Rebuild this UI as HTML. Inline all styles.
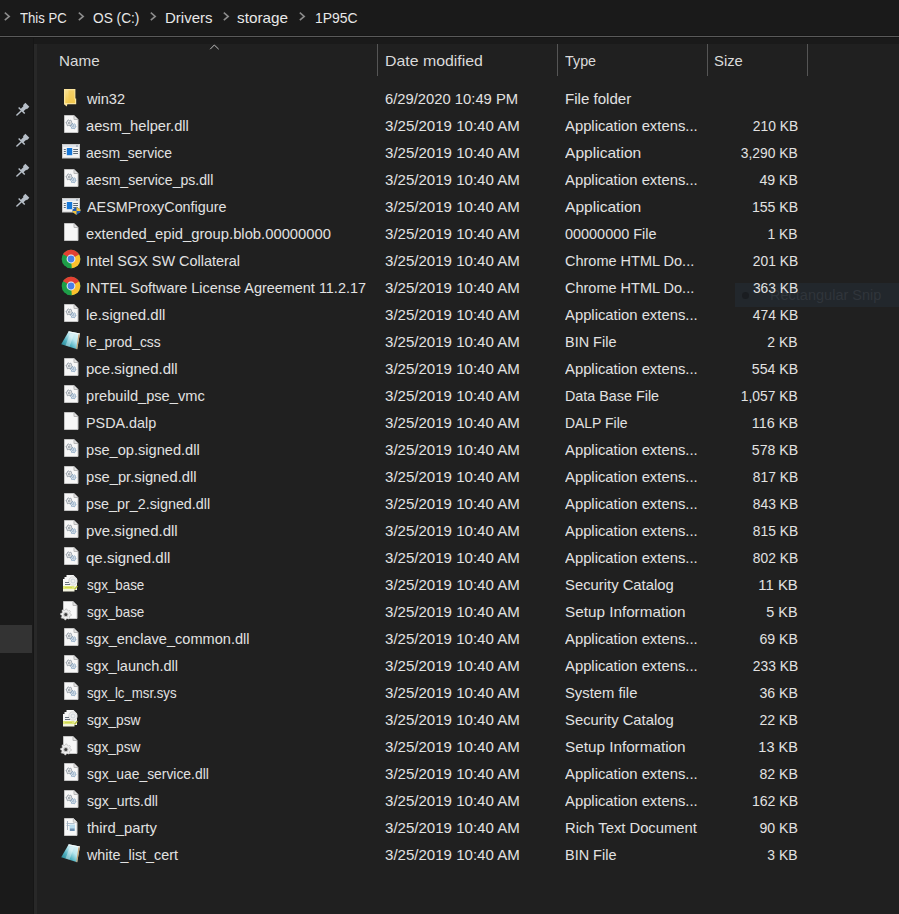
<!DOCTYPE html><html><head><meta charset="utf-8"><style>
html,body{margin:0;padding:0}
body{width:899px;height:914px;position:relative;overflow:hidden;background:#1a1a1a;font-family:"Liberation Sans",sans-serif;}
.t{position:absolute;white-space:nowrap;font-size:15px;line-height:18px;color:#e2e2e2;transform-origin:0 0}
.r{transform-origin:100% 0}
.h{color:#dadada}
.bc{color:#e8e8e8}
.ab{position:absolute}
.ic{position:absolute;line-height:0}
</style></head><body>

<div class="ab" style="left:0;top:35px;width:899px;height:1px;background:#161616"></div>
<div class="ab" style="left:0;top:36px;width:899px;height:1px;background:#5a5a5a"></div>
<div class="ab" style="left:0;top:37px;width:899px;height:1px;background:#151515"></div>
<div class="ab" style="left:37px;top:44px;width:862px;height:870px;background:#202020"></div>
<div class="ab" style="left:33px;top:38px;width:1px;height:876px;background:#161616"></div>
<div class="ab" style="left:34px;top:44px;width:3px;height:870px;background:#282828"></div>
<div class="ab" style="left:0;top:625px;width:32px;height:28px;background:#333333"></div>
<div class="ic" style="left:16px;top:102px"><svg width="15" height="15" viewBox="0 0 15 15"><path d="M2.11 6.01L3.17 4.95L4.87 6.65L7.55 3.96L6.92 3.32L9.39 0.85L13.35 4.81L10.88 7.28L10.24 6.65L7.55 9.33L9.25 11.03L8.19 12.09Z" fill="#b6bec7"/><path d="M5.15 9.05L0.91 13.01" stroke="#b6bec7" stroke-width="1.5" stroke-linecap="round"/></svg></div>
<div class="ic" style="left:16px;top:133px"><svg width="15" height="15" viewBox="0 0 15 15"><path d="M2.11 6.01L3.17 4.95L4.87 6.65L7.55 3.96L6.92 3.32L9.39 0.85L13.35 4.81L10.88 7.28L10.24 6.65L7.55 9.33L9.25 11.03L8.19 12.09Z" fill="#b6bec7"/><path d="M5.15 9.05L0.91 13.01" stroke="#b6bec7" stroke-width="1.5" stroke-linecap="round"/></svg></div>
<div class="ic" style="left:16px;top:163px"><svg width="15" height="15" viewBox="0 0 15 15"><path d="M2.11 6.01L3.17 4.95L4.87 6.65L7.55 3.96L6.92 3.32L9.39 0.85L13.35 4.81L10.88 7.28L10.24 6.65L7.55 9.33L9.25 11.03L8.19 12.09Z" fill="#b6bec7"/><path d="M5.15 9.05L0.91 13.01" stroke="#b6bec7" stroke-width="1.5" stroke-linecap="round"/></svg></div>
<div class="ic" style="left:16px;top:193px"><svg width="15" height="15" viewBox="0 0 15 15"><path d="M2.11 6.01L3.17 4.95L4.87 6.65L7.55 3.96L6.92 3.32L9.39 0.85L13.35 4.81L10.88 7.28L10.24 6.65L7.55 9.33L9.25 11.03L8.19 12.09Z" fill="#b6bec7"/><path d="M5.15 9.05L0.91 13.01" stroke="#b6bec7" stroke-width="1.5" stroke-linecap="round"/></svg></div>
<div class="ic" style="left:4px;top:12px"><svg width="7" height="10" viewBox="0 0 7 10"><path d="M0.8 0.7L5.2 4.4L0.8 8.1" fill="none" stroke="#8c8c8c" stroke-width="1.6"/></svg></div>
<div class="ic" style="left:78px;top:12px"><svg width="7" height="10" viewBox="0 0 7 10"><path d="M0.8 0.7L5.2 4.4L0.8 8.1" fill="none" stroke="#8c8c8c" stroke-width="1.6"/></svg></div>
<div class="ic" style="left:150px;top:12px"><svg width="7" height="10" viewBox="0 0 7 10"><path d="M0.8 0.7L5.2 4.4L0.8 8.1" fill="none" stroke="#8c8c8c" stroke-width="1.6"/></svg></div>
<div class="ic" style="left:223px;top:12px"><svg width="7" height="10" viewBox="0 0 7 10"><path d="M0.8 0.7L5.2 4.4L0.8 8.1" fill="none" stroke="#8c8c8c" stroke-width="1.6"/></svg></div>
<div class="ic" style="left:299px;top:12px"><svg width="7" height="10" viewBox="0 0 7 10"><path d="M0.8 0.7L5.2 4.4L0.8 8.1" fill="none" stroke="#8c8c8c" stroke-width="1.6"/></svg></div>
<div id="k_bc0" class="t bc" style="left:20.30px;top:9px;transform:scaleX(0.8760)">This PC</div>
<div id="k_bc1" class="t bc" style="left:92.62px;top:9px;transform:scaleX(0.9135)">OS (C:)</div>
<div id="k_bc2" class="t bc" style="left:164.98px;top:9px;transform:scaleX(1.0000)">Drivers</div>
<div id="k_bc3" class="t bc" style="left:237.44px;top:9px;transform:scaleX(1.0195)">storage</div>
<div id="k_bc4" class="t bc" style="left:315.28px;top:9px;transform:scaleX(0.9284)">1P95C</div>
<div id="k_h0" class="t h" style="left:58.64px;top:52px;transform:scaleX(1.0145)">Name</div>
<div id="k_h1" class="t h" style="left:384.52px;top:52px;transform:scaleX(1.0584)">Date modified</div>
<div id="k_h2" class="t h" style="left:565.00px;top:52px;transform:scaleX(0.9552)">Type</div>
<div id="k_h3" class="t h" style="left:714.16px;top:52px;transform:scaleX(0.9883)">Size</div>
<div class="ab" style="left:377px;top:44px;width:1px;height:32px;background:#555555"></div>
<div class="ab" style="left:557px;top:44px;width:1px;height:32px;background:#555555"></div>
<div class="ab" style="left:707px;top:44px;width:1px;height:32px;background:#555555"></div>
<div class="ab" style="left:807px;top:44px;width:1px;height:32px;background:#555555"></div>
<div class="ic" style="left:209px;top:44px"><svg width="11" height="7" viewBox="0 0 11 7"><path d="M1.2 5.2L5.3 1L9.7 5.2" fill="none" stroke="#d0d0d0" stroke-width=".9"/></svg></div>
<div class="ab" style="left:735px;top:283px;width:164px;height:24px;background:#22272c"></div>
<div class="ab" style="left:742px;top:292px;width:7px;height:7px;border-radius:50%;background:#1a1d21"></div>
<div class="t" style="left:770px;top:286px;font-size:15.5px;color:#30353b;transform:scaleX(.937)">Rectangular Snip</div>
<div class="ic" style="left:64px;top:89px"><svg width="13" height="18" viewBox="0 0 13 18"><defs><linearGradient id="fg" x1="0" y1="0" x2="0" y2="1"><stop offset="0" stop-color="#f8de8c"/><stop offset="1" stop-color="#f2c94f"/></linearGradient></defs><path d="M0 0H11.4V9.5H12.2V15.3H3.4L2.7 17.4L0 15.3Z" fill="#fbe49c"/><path d="M1.3 1.3H10.3V10.3H11V14.1H1.3Z" fill="url(#fg)"/><path d="M4.5 1.3H10.3V14.1H4.5Z" fill="#f1c54a" opacity=".55"/></svg></div>
<div id="k_n0" class="t" style="left:86.60px;top:90px;transform:scaleX(0.9704)">win32</div>
<div id="k_d0" class="t" style="left:384.70px;top:90px;transform:scaleX(0.9851)">6/29/2020 10:49 PM</div>
<div id="k_t0" class="t" style="left:565.00px;top:90px;transform:scaleX(1.0065)">File folder</div>
<div class="ic" style="left:64px;top:115px"><svg width="15" height="18" viewBox="0 0 15 18"><path d="M0.5 0.5h9.5l4 4v13h-13.5z" fill="#f7f7f7" stroke="#c4c4c4" stroke-width="1"/><path d="M10 0.5v4h4" fill="#e2e2e2" stroke="#b8b8b8" stroke-width="1"/><path d="M8.30 8.00L8.19 8.80L7.28 9.20L6.90 9.70L6.75 10.68L6.00 10.99L5.20 10.40L4.58 10.32L3.65 10.68L3.01 10.19L3.12 9.20L2.88 8.62L2.10 8.00L2.21 7.20L3.12 6.80L3.50 6.30L3.65 5.32L4.40 5.01L5.20 5.60L5.82 5.68L6.75 5.32L7.39 5.81L7.28 6.80L7.52 7.38Z" fill="none" stroke="#808a95" stroke-width="0.85"/><circle cx="5.2" cy="8.0" r="0.96" fill="none" stroke="#808a95" stroke-width="0.85"/><path d="M12.00 11.30L11.91 12.00L11.03 12.30L10.71 12.71L10.65 13.64L10.00 13.91L9.30 13.30L8.78 13.23L7.95 13.64L7.39 13.21L7.57 12.30L7.37 11.82L6.60 11.30L6.69 10.60L7.57 10.30L7.89 9.89L7.95 8.96L8.60 8.69L9.30 9.30L9.82 9.37L10.65 8.96L11.21 9.39L11.03 10.30L11.23 10.78Z" fill="none" stroke="#7a9cbc" stroke-width="0.85"/><circle cx="9.3" cy="11.3" r="0.80" fill="none" stroke="#7a9cbc" stroke-width="0.85"/></svg></div>
<div id="k_n1" class="t" style="left:86.00px;top:117px;transform:scaleX(0.9788)">aesm_helper.dll</div>
<div id="k_d1" class="t" style="left:384.70px;top:117px;transform:scaleX(1.0040)">3/25/2019 10:40 AM</div>
<div id="k_t1" class="t" style="left:565.00px;top:117px;transform:scaleX(0.9881)">Application extens...</div>
<div id="k_s1" class="t r" style="right:101px;top:117px;transform:scaleX(0.9220)">210 KB</div>
<div class="ic" style="left:62px;top:144px"><svg width="19" height="17" viewBox="0 0 19 17"><rect x="0.5" y="0.5" width="17" height="13.5" fill="#f3f3f3" stroke="#c9c9c9"/><rect x="1" y="1" width="16" height="2" fill="#dde3ea"/><path d="M14 2h2" stroke="#8a96a3" stroke-width="1"/><rect x="4.8" y="4" width="5.4" height="7.2" fill="#1677d8"/><path d="M1.8 5.5h2M1.8 7.5h2M1.8 9.5h2M11.2 5.5h4.8M11.2 7.5h4.8M11.2 9.5h4.8" stroke="#5d6b78" stroke-width="1"/></svg></div>
<div id="k_n2" class="t" style="left:86.00px;top:144px;transform:scaleX(0.9299)">aesm_service</div>
<div id="k_d2" class="t" style="left:384.70px;top:144px;transform:scaleX(1.0040)">3/25/2019 10:40 AM</div>
<div id="k_t2" class="t" style="left:565.00px;top:144px;transform:scaleX(1.0385)">Application</div>
<div id="k_s2" class="t r" style="right:101px;top:144px;transform:scaleX(0.9219)">3,290 KB</div>
<div class="ic" style="left:64px;top:169px"><svg width="15" height="18" viewBox="0 0 15 18"><path d="M0.5 0.5h9.5l4 4v13h-13.5z" fill="#f7f7f7" stroke="#c4c4c4" stroke-width="1"/><path d="M10 0.5v4h4" fill="#e2e2e2" stroke="#b8b8b8" stroke-width="1"/><path d="M8.30 8.00L8.19 8.80L7.28 9.20L6.90 9.70L6.75 10.68L6.00 10.99L5.20 10.40L4.58 10.32L3.65 10.68L3.01 10.19L3.12 9.20L2.88 8.62L2.10 8.00L2.21 7.20L3.12 6.80L3.50 6.30L3.65 5.32L4.40 5.01L5.20 5.60L5.82 5.68L6.75 5.32L7.39 5.81L7.28 6.80L7.52 7.38Z" fill="none" stroke="#808a95" stroke-width="0.85"/><circle cx="5.2" cy="8.0" r="0.96" fill="none" stroke="#808a95" stroke-width="0.85"/><path d="M12.00 11.30L11.91 12.00L11.03 12.30L10.71 12.71L10.65 13.64L10.00 13.91L9.30 13.30L8.78 13.23L7.95 13.64L7.39 13.21L7.57 12.30L7.37 11.82L6.60 11.30L6.69 10.60L7.57 10.30L7.89 9.89L7.95 8.96L8.60 8.69L9.30 9.30L9.82 9.37L10.65 8.96L11.21 9.39L11.03 10.30L11.23 10.78Z" fill="none" stroke="#7a9cbc" stroke-width="0.85"/><circle cx="9.3" cy="11.3" r="0.80" fill="none" stroke="#7a9cbc" stroke-width="0.85"/></svg></div>
<div id="k_n3" class="t" style="left:86.00px;top:171px;transform:scaleX(0.9367)">aesm_service_ps.dll</div>
<div id="k_d3" class="t" style="left:384.70px;top:171px;transform:scaleX(1.0040)">3/25/2019 10:40 AM</div>
<div id="k_t3" class="t" style="left:565.00px;top:171px;transform:scaleX(0.9881)">Application extens...</div>
<div id="k_s3" class="t r" style="right:101px;top:171px;transform:scaleX(0.9418)">49 KB</div>
<div class="ic" style="left:62px;top:198px"><svg width="19" height="17" viewBox="0 0 19 17"><rect x="0.5" y="0.5" width="17" height="13.5" fill="#f3f3f3" stroke="#c9c9c9"/><rect x="1" y="1" width="16" height="2" fill="#dde3ea"/><path d="M14 2h2" stroke="#8a96a3" stroke-width="1"/><rect x="4.8" y="4" width="5.4" height="7.2" fill="#1677d8"/><path d="M1.8 5.5h2M1.8 7.5h2M1.8 9.5h2M11.2 5.5h4.8M11.2 7.5h4.8M11.2 9.5h4.8" stroke="#5d6b78" stroke-width="1"/><path d="M10.5 11.5L14.5 8.8L18.5 11.5V14L14.5 17L10.5 14Z" fill="#1d5bb0"/><path d="M14.5 8.8L18.5 11.5V13H14.5Z" fill="#f2c23a"/><path d="M10.5 13H14.5V17L10.5 14Z" fill="#f2c23a"/></svg></div>
<div id="k_n4" class="t" style="left:86.60px;top:198px;transform:scaleX(0.9559)">AESMProxyConfigure</div>
<div id="k_d4" class="t" style="left:384.70px;top:198px;transform:scaleX(1.0040)">3/25/2019 10:40 AM</div>
<div id="k_t4" class="t" style="left:565.00px;top:198px;transform:scaleX(1.0385)">Application</div>
<div id="k_s4" class="t r" style="right:101px;top:198px;transform:scaleX(0.9412)">155 KB</div>
<div class="ic" style="left:64px;top:223px"><svg width="15" height="18" viewBox="0 0 15 18"><path d="M0.5 0.5h9.5l4 4v13h-13.5z" fill="#f7f7f7" stroke="#c4c4c4" stroke-width="1"/><path d="M10 0.5v4h4" fill="#e2e2e2" stroke="#b8b8b8" stroke-width="1"/></svg></div>
<div id="k_n5" class="t" style="left:86.00px;top:225px;transform:scaleX(0.9855)">extended_epid_group.blob.00000000</div>
<div id="k_d5" class="t" style="left:384.70px;top:225px;transform:scaleX(1.0040)">3/25/2019 10:40 AM</div>
<div id="k_t5" class="t" style="left:565.00px;top:225px;transform:scaleX(0.9625)">00000000 File</div>
<div id="k_s5" class="t r" style="right:101px;top:225px;transform:scaleX(0.9216)">1 KB</div>
<div class="ic" style="left:61px;top:249px"><svg width="20" height="20" viewBox="-10 -10 20 20"><circle r="9.3" fill="#1e9e48"/><path d="M0 -4.3 L-8.05 -4.65 A9.3 9.3 0 0 1 8.05 -4.65 L 3.72 -2.15 A4.3 4.3 0 0 0 -3.72 -2.15 Z" fill="#e34133"/><path d="M0 0 L8.05 -4.65 A9.3 9.3 0 0 1 0.5 9.29 L0 0 Z" fill="#fbc02d"/><path d="M0 0 L0 -9.3 L-8.05 -4.65 Z" fill="#e34133"/><path d="M0 0 L-8.05 -4.65 L-4 8.4 L0.5 9.29 Z" fill="#1e9e48"/><path d="M0 0 L8.05 -4.65 L0 -9.3 Z" fill="#e34133"/><circle r="4.4" fill="#eef3fb"/><circle r="3.4" fill="#4a7fe6"/></svg></div>
<div id="k_n6" class="t" style="left:86.00px;top:252px;transform:scaleX(0.9620)">Intel SGX SW Collateral</div>
<div id="k_d6" class="t" style="left:384.70px;top:252px;transform:scaleX(1.0040)">3/25/2019 10:40 AM</div>
<div id="k_t6" class="t" style="left:565.00px;top:252px;transform:scaleX(0.9668)">Chrome HTML Do...</div>
<div id="k_s6" class="t r" style="right:101px;top:252px;transform:scaleX(0.9220)">201 KB</div>
<div class="ic" style="left:61px;top:276px"><svg width="20" height="20" viewBox="-10 -10 20 20"><circle r="9.3" fill="#1e9e48"/><path d="M0 -4.3 L-8.05 -4.65 A9.3 9.3 0 0 1 8.05 -4.65 L 3.72 -2.15 A4.3 4.3 0 0 0 -3.72 -2.15 Z" fill="#e34133"/><path d="M0 0 L8.05 -4.65 A9.3 9.3 0 0 1 0.5 9.29 L0 0 Z" fill="#fbc02d"/><path d="M0 0 L0 -9.3 L-8.05 -4.65 Z" fill="#e34133"/><path d="M0 0 L-8.05 -4.65 L-4 8.4 L0.5 9.29 Z" fill="#1e9e48"/><path d="M0 0 L8.05 -4.65 L0 -9.3 Z" fill="#e34133"/><circle r="4.4" fill="#eef3fb"/><circle r="3.4" fill="#4a7fe6"/></svg></div>
<div id="k_n7" class="t" style="left:86.00px;top:279px;transform:scaleX(0.9621)">INTEL Software License Agreement 11.2.17</div>
<div id="k_d7" class="t" style="left:384.70px;top:279px;transform:scaleX(1.0040)">3/25/2019 10:40 AM</div>
<div id="k_t7" class="t" style="left:565.00px;top:279px;transform:scaleX(0.9668)">Chrome HTML Do...</div>
<div id="k_s7" class="t r" style="right:101px;top:279px;transform:scaleX(0.9211)">363 KB</div>
<div class="ic" style="left:64px;top:304px"><svg width="15" height="18" viewBox="0 0 15 18"><path d="M0.5 0.5h9.5l4 4v13h-13.5z" fill="#f7f7f7" stroke="#c4c4c4" stroke-width="1"/><path d="M10 0.5v4h4" fill="#e2e2e2" stroke="#b8b8b8" stroke-width="1"/><path d="M8.30 8.00L8.19 8.80L7.28 9.20L6.90 9.70L6.75 10.68L6.00 10.99L5.20 10.40L4.58 10.32L3.65 10.68L3.01 10.19L3.12 9.20L2.88 8.62L2.10 8.00L2.21 7.20L3.12 6.80L3.50 6.30L3.65 5.32L4.40 5.01L5.20 5.60L5.82 5.68L6.75 5.32L7.39 5.81L7.28 6.80L7.52 7.38Z" fill="none" stroke="#808a95" stroke-width="0.85"/><circle cx="5.2" cy="8.0" r="0.96" fill="none" stroke="#808a95" stroke-width="0.85"/><path d="M12.00 11.30L11.91 12.00L11.03 12.30L10.71 12.71L10.65 13.64L10.00 13.91L9.30 13.30L8.78 13.23L7.95 13.64L7.39 13.21L7.57 12.30L7.37 11.82L6.60 11.30L6.69 10.60L7.57 10.30L7.89 9.89L7.95 8.96L8.60 8.69L9.30 9.30L9.82 9.37L10.65 8.96L11.21 9.39L11.03 10.30L11.23 10.78Z" fill="none" stroke="#7a9cbc" stroke-width="0.85"/><circle cx="9.3" cy="11.3" r="0.80" fill="none" stroke="#7a9cbc" stroke-width="0.85"/></svg></div>
<div id="k_n8" class="t" style="left:86.00px;top:306px;transform:scaleX(1.0016)">le.signed.dll</div>
<div id="k_d8" class="t" style="left:384.70px;top:306px;transform:scaleX(1.0040)">3/25/2019 10:40 AM</div>
<div id="k_t8" class="t" style="left:565.00px;top:306px;transform:scaleX(0.9881)">Application extens...</div>
<div id="k_s8" class="t r" style="right:101px;top:306px;transform:scaleX(0.9216)">474 KB</div>
<div class="ic" style="left:61px;top:331px"><svg width="20" height="19" viewBox="0 0 20 19"><defs><linearGradient id="bg" x1="0" y1="1" x2="1" y2="0"><stop offset="0" stop-color="#17707e"/><stop offset=".35" stop-color="#4fb0c0"/><stop offset=".6" stop-color="#b8e6ee"/><stop offset="1" stop-color="#f2fbfc"/></linearGradient></defs><path d="M7.7 0.3L18.9 2.6L16.2 18.2L0.2 13.3Z" fill="url(#bg)"/><path d="M9 2.5L13 3.3L8.5 15.8L4.5 14.5Z" fill="#ffffff" opacity=".35"/><path d="M17.6 2.3L18.9 2.6L16.2 18.2L15.2 17.9Z" fill="#c8a070"/><path d="M7.7 0.3L18.9 2.6L18.6 3.6L7.4 1.4Z" fill="#f4fbfc"/></svg></div>
<div id="k_n9" class="t" style="left:86.00px;top:333px;transform:scaleX(0.9239)">le_prod_css</div>
<div id="k_d9" class="t" style="left:384.70px;top:333px;transform:scaleX(1.0040)">3/25/2019 10:40 AM</div>
<div id="k_t9" class="t" style="left:565.00px;top:333px;transform:scaleX(0.9640)">BIN File</div>
<div id="k_s9" class="t r" style="right:101px;top:333px;transform:scaleX(0.9270)">2 KB</div>
<div class="ic" style="left:64px;top:358px"><svg width="15" height="18" viewBox="0 0 15 18"><path d="M0.5 0.5h9.5l4 4v13h-13.5z" fill="#f7f7f7" stroke="#c4c4c4" stroke-width="1"/><path d="M10 0.5v4h4" fill="#e2e2e2" stroke="#b8b8b8" stroke-width="1"/><path d="M8.30 8.00L8.19 8.80L7.28 9.20L6.90 9.70L6.75 10.68L6.00 10.99L5.20 10.40L4.58 10.32L3.65 10.68L3.01 10.19L3.12 9.20L2.88 8.62L2.10 8.00L2.21 7.20L3.12 6.80L3.50 6.30L3.65 5.32L4.40 5.01L5.20 5.60L5.82 5.68L6.75 5.32L7.39 5.81L7.28 6.80L7.52 7.38Z" fill="none" stroke="#808a95" stroke-width="0.85"/><circle cx="5.2" cy="8.0" r="0.96" fill="none" stroke="#808a95" stroke-width="0.85"/><path d="M12.00 11.30L11.91 12.00L11.03 12.30L10.71 12.71L10.65 13.64L10.00 13.91L9.30 13.30L8.78 13.23L7.95 13.64L7.39 13.21L7.57 12.30L7.37 11.82L6.60 11.30L6.69 10.60L7.57 10.30L7.89 9.89L7.95 8.96L8.60 8.69L9.30 9.30L9.82 9.37L10.65 8.96L11.21 9.39L11.03 10.30L11.23 10.78Z" fill="none" stroke="#7a9cbc" stroke-width="0.85"/><circle cx="9.3" cy="11.3" r="0.80" fill="none" stroke="#7a9cbc" stroke-width="0.85"/></svg></div>
<div id="k_n10" class="t" style="left:86.00px;top:360px;transform:scaleX(0.9991)">pce.signed.dll</div>
<div id="k_d10" class="t" style="left:384.70px;top:360px;transform:scaleX(1.0040)">3/25/2019 10:40 AM</div>
<div id="k_t10" class="t" style="left:565.00px;top:360px;transform:scaleX(0.9881)">Application extens...</div>
<div id="k_s10" class="t r" style="right:101px;top:360px;transform:scaleX(0.9417)">554 KB</div>
<div class="ic" style="left:64px;top:385px"><svg width="15" height="18" viewBox="0 0 15 18"><path d="M0.5 0.5h9.5l4 4v13h-13.5z" fill="#f7f7f7" stroke="#c4c4c4" stroke-width="1"/><path d="M10 0.5v4h4" fill="#e2e2e2" stroke="#b8b8b8" stroke-width="1"/><path d="M8.30 8.00L8.19 8.80L7.28 9.20L6.90 9.70L6.75 10.68L6.00 10.99L5.20 10.40L4.58 10.32L3.65 10.68L3.01 10.19L3.12 9.20L2.88 8.62L2.10 8.00L2.21 7.20L3.12 6.80L3.50 6.30L3.65 5.32L4.40 5.01L5.20 5.60L5.82 5.68L6.75 5.32L7.39 5.81L7.28 6.80L7.52 7.38Z" fill="none" stroke="#808a95" stroke-width="0.85"/><circle cx="5.2" cy="8.0" r="0.96" fill="none" stroke="#808a95" stroke-width="0.85"/><path d="M12.00 11.30L11.91 12.00L11.03 12.30L10.71 12.71L10.65 13.64L10.00 13.91L9.30 13.30L8.78 13.23L7.95 13.64L7.39 13.21L7.57 12.30L7.37 11.82L6.60 11.30L6.69 10.60L7.57 10.30L7.89 9.89L7.95 8.96L8.60 8.69L9.30 9.30L9.82 9.37L10.65 8.96L11.21 9.39L11.03 10.30L11.23 10.78Z" fill="none" stroke="#7a9cbc" stroke-width="0.85"/><circle cx="9.3" cy="11.3" r="0.80" fill="none" stroke="#7a9cbc" stroke-width="0.85"/></svg></div>
<div id="k_n11" class="t" style="left:86.00px;top:387px;transform:scaleX(0.9750)">prebuild_pse_vmc</div>
<div id="k_d11" class="t" style="left:384.70px;top:387px;transform:scaleX(1.0040)">3/25/2019 10:40 AM</div>
<div id="k_t11" class="t" style="left:565.00px;top:387px;transform:scaleX(0.9559)">Data Base File</div>
<div id="k_s11" class="t r" style="right:101px;top:387px;transform:scaleX(0.9219)">1,057 KB</div>
<div class="ic" style="left:64px;top:412px"><svg width="15" height="18" viewBox="0 0 15 18"><path d="M0.5 0.5h9.5l4 4v13h-13.5z" fill="#f7f7f7" stroke="#c4c4c4" stroke-width="1"/><path d="M10 0.5v4h4" fill="#e2e2e2" stroke="#b8b8b8" stroke-width="1"/></svg></div>
<div id="k_n12" class="t" style="left:86.00px;top:414px;transform:scaleX(0.9573)">PSDA.dalp</div>
<div id="k_d12" class="t" style="left:384.70px;top:414px;transform:scaleX(1.0040)">3/25/2019 10:40 AM</div>
<div id="k_t12" class="t" style="left:565.00px;top:414px;transform:scaleX(0.9292)">DALP File</div>
<div id="k_s12" class="t r" style="right:101px;top:414px;transform:scaleX(0.9612)">116 KB</div>
<div class="ic" style="left:64px;top:439px"><svg width="15" height="18" viewBox="0 0 15 18"><path d="M0.5 0.5h9.5l4 4v13h-13.5z" fill="#f7f7f7" stroke="#c4c4c4" stroke-width="1"/><path d="M10 0.5v4h4" fill="#e2e2e2" stroke="#b8b8b8" stroke-width="1"/><path d="M8.30 8.00L8.19 8.80L7.28 9.20L6.90 9.70L6.75 10.68L6.00 10.99L5.20 10.40L4.58 10.32L3.65 10.68L3.01 10.19L3.12 9.20L2.88 8.62L2.10 8.00L2.21 7.20L3.12 6.80L3.50 6.30L3.65 5.32L4.40 5.01L5.20 5.60L5.82 5.68L6.75 5.32L7.39 5.81L7.28 6.80L7.52 7.38Z" fill="none" stroke="#808a95" stroke-width="0.85"/><circle cx="5.2" cy="8.0" r="0.96" fill="none" stroke="#808a95" stroke-width="0.85"/><path d="M12.00 11.30L11.91 12.00L11.03 12.30L10.71 12.71L10.65 13.64L10.00 13.91L9.30 13.30L8.78 13.23L7.95 13.64L7.39 13.21L7.57 12.30L7.37 11.82L6.60 11.30L6.69 10.60L7.57 10.30L7.89 9.89L7.95 8.96L8.60 8.69L9.30 9.30L9.82 9.37L10.65 8.96L11.21 9.39L11.03 10.30L11.23 10.78Z" fill="none" stroke="#7a9cbc" stroke-width="0.85"/><circle cx="9.3" cy="11.3" r="0.80" fill="none" stroke="#7a9cbc" stroke-width="0.85"/></svg></div>
<div id="k_n13" class="t" style="left:86.00px;top:441px;transform:scaleX(0.9740)">pse_op.signed.dll</div>
<div id="k_d13" class="t" style="left:384.70px;top:441px;transform:scaleX(1.0040)">3/25/2019 10:40 AM</div>
<div id="k_t13" class="t" style="left:565.00px;top:441px;transform:scaleX(0.9881)">Application extens...</div>
<div id="k_s13" class="t r" style="right:101px;top:441px;transform:scaleX(0.9417)">578 KB</div>
<div class="ic" style="left:64px;top:466px"><svg width="15" height="18" viewBox="0 0 15 18"><path d="M0.5 0.5h9.5l4 4v13h-13.5z" fill="#f7f7f7" stroke="#c4c4c4" stroke-width="1"/><path d="M10 0.5v4h4" fill="#e2e2e2" stroke="#b8b8b8" stroke-width="1"/><path d="M8.30 8.00L8.19 8.80L7.28 9.20L6.90 9.70L6.75 10.68L6.00 10.99L5.20 10.40L4.58 10.32L3.65 10.68L3.01 10.19L3.12 9.20L2.88 8.62L2.10 8.00L2.21 7.20L3.12 6.80L3.50 6.30L3.65 5.32L4.40 5.01L5.20 5.60L5.82 5.68L6.75 5.32L7.39 5.81L7.28 6.80L7.52 7.38Z" fill="none" stroke="#808a95" stroke-width="0.85"/><circle cx="5.2" cy="8.0" r="0.96" fill="none" stroke="#808a95" stroke-width="0.85"/><path d="M12.00 11.30L11.91 12.00L11.03 12.30L10.71 12.71L10.65 13.64L10.00 13.91L9.30 13.30L8.78 13.23L7.95 13.64L7.39 13.21L7.57 12.30L7.37 11.82L6.60 11.30L6.69 10.60L7.57 10.30L7.89 9.89L7.95 8.96L8.60 8.69L9.30 9.30L9.82 9.37L10.65 8.96L11.21 9.39L11.03 10.30L11.23 10.78Z" fill="none" stroke="#7a9cbc" stroke-width="0.85"/><circle cx="9.3" cy="11.3" r="0.80" fill="none" stroke="#7a9cbc" stroke-width="0.85"/></svg></div>
<div id="k_n14" class="t" style="left:86.00px;top:468px;transform:scaleX(0.9812)">pse_pr.signed.dll</div>
<div id="k_d14" class="t" style="left:384.70px;top:468px;transform:scaleX(1.0040)">3/25/2019 10:40 AM</div>
<div id="k_t14" class="t" style="left:565.00px;top:468px;transform:scaleX(0.9881)">Application extens...</div>
<div id="k_s14" class="t r" style="right:101px;top:468px;transform:scaleX(0.9220)">817 KB</div>
<div class="ic" style="left:64px;top:493px"><svg width="15" height="18" viewBox="0 0 15 18"><path d="M0.5 0.5h9.5l4 4v13h-13.5z" fill="#f7f7f7" stroke="#c4c4c4" stroke-width="1"/><path d="M10 0.5v4h4" fill="#e2e2e2" stroke="#b8b8b8" stroke-width="1"/><path d="M8.30 8.00L8.19 8.80L7.28 9.20L6.90 9.70L6.75 10.68L6.00 10.99L5.20 10.40L4.58 10.32L3.65 10.68L3.01 10.19L3.12 9.20L2.88 8.62L2.10 8.00L2.21 7.20L3.12 6.80L3.50 6.30L3.65 5.32L4.40 5.01L5.20 5.60L5.82 5.68L6.75 5.32L7.39 5.81L7.28 6.80L7.52 7.38Z" fill="none" stroke="#808a95" stroke-width="0.85"/><circle cx="5.2" cy="8.0" r="0.96" fill="none" stroke="#808a95" stroke-width="0.85"/><path d="M12.00 11.30L11.91 12.00L11.03 12.30L10.71 12.71L10.65 13.64L10.00 13.91L9.30 13.30L8.78 13.23L7.95 13.64L7.39 13.21L7.57 12.30L7.37 11.82L6.60 11.30L6.69 10.60L7.57 10.30L7.89 9.89L7.95 8.96L8.60 8.69L9.30 9.30L9.82 9.37L10.65 8.96L11.21 9.39L11.03 10.30L11.23 10.78Z" fill="none" stroke="#7a9cbc" stroke-width="0.85"/><circle cx="9.3" cy="11.3" r="0.80" fill="none" stroke="#7a9cbc" stroke-width="0.85"/></svg></div>
<div id="k_n15" class="t" style="left:86.00px;top:495px;transform:scaleX(0.9540)">pse_pr_2.signed.dll</div>
<div id="k_d15" class="t" style="left:384.70px;top:495px;transform:scaleX(1.0040)">3/25/2019 10:40 AM</div>
<div id="k_t15" class="t" style="left:565.00px;top:495px;transform:scaleX(0.9881)">Application extens...</div>
<div id="k_s15" class="t r" style="right:101px;top:495px;transform:scaleX(0.9220)">843 KB</div>
<div class="ic" style="left:64px;top:520px"><svg width="15" height="18" viewBox="0 0 15 18"><path d="M0.5 0.5h9.5l4 4v13h-13.5z" fill="#f7f7f7" stroke="#c4c4c4" stroke-width="1"/><path d="M10 0.5v4h4" fill="#e2e2e2" stroke="#b8b8b8" stroke-width="1"/><path d="M8.30 8.00L8.19 8.80L7.28 9.20L6.90 9.70L6.75 10.68L6.00 10.99L5.20 10.40L4.58 10.32L3.65 10.68L3.01 10.19L3.12 9.20L2.88 8.62L2.10 8.00L2.21 7.20L3.12 6.80L3.50 6.30L3.65 5.32L4.40 5.01L5.20 5.60L5.82 5.68L6.75 5.32L7.39 5.81L7.28 6.80L7.52 7.38Z" fill="none" stroke="#808a95" stroke-width="0.85"/><circle cx="5.2" cy="8.0" r="0.96" fill="none" stroke="#808a95" stroke-width="0.85"/><path d="M12.00 11.30L11.91 12.00L11.03 12.30L10.71 12.71L10.65 13.64L10.00 13.91L9.30 13.30L8.78 13.23L7.95 13.64L7.39 13.21L7.57 12.30L7.37 11.82L6.60 11.30L6.69 10.60L7.57 10.30L7.89 9.89L7.95 8.96L8.60 8.69L9.30 9.30L9.82 9.37L10.65 8.96L11.21 9.39L11.03 10.30L11.23 10.78Z" fill="none" stroke="#7a9cbc" stroke-width="0.85"/><circle cx="9.3" cy="11.3" r="0.80" fill="none" stroke="#7a9cbc" stroke-width="0.85"/></svg></div>
<div id="k_n16" class="t" style="left:86.00px;top:522px;transform:scaleX(0.9991)">pve.signed.dll</div>
<div id="k_d16" class="t" style="left:384.70px;top:522px;transform:scaleX(1.0040)">3/25/2019 10:40 AM</div>
<div id="k_t16" class="t" style="left:565.00px;top:522px;transform:scaleX(0.9881)">Application extens...</div>
<div id="k_s16" class="t r" style="right:101px;top:522px;transform:scaleX(0.9220)">815 KB</div>
<div class="ic" style="left:64px;top:547px"><svg width="15" height="18" viewBox="0 0 15 18"><path d="M0.5 0.5h9.5l4 4v13h-13.5z" fill="#f7f7f7" stroke="#c4c4c4" stroke-width="1"/><path d="M10 0.5v4h4" fill="#e2e2e2" stroke="#b8b8b8" stroke-width="1"/><path d="M8.30 8.00L8.19 8.80L7.28 9.20L6.90 9.70L6.75 10.68L6.00 10.99L5.20 10.40L4.58 10.32L3.65 10.68L3.01 10.19L3.12 9.20L2.88 8.62L2.10 8.00L2.21 7.20L3.12 6.80L3.50 6.30L3.65 5.32L4.40 5.01L5.20 5.60L5.82 5.68L6.75 5.32L7.39 5.81L7.28 6.80L7.52 7.38Z" fill="none" stroke="#808a95" stroke-width="0.85"/><circle cx="5.2" cy="8.0" r="0.96" fill="none" stroke="#808a95" stroke-width="0.85"/><path d="M12.00 11.30L11.91 12.00L11.03 12.30L10.71 12.71L10.65 13.64L10.00 13.91L9.30 13.30L8.78 13.23L7.95 13.64L7.39 13.21L7.57 12.30L7.37 11.82L6.60 11.30L6.69 10.60L7.57 10.30L7.89 9.89L7.95 8.96L8.60 8.69L9.30 9.30L9.82 9.37L10.65 8.96L11.21 9.39L11.03 10.30L11.23 10.78Z" fill="none" stroke="#7a9cbc" stroke-width="0.85"/><circle cx="9.3" cy="11.3" r="0.80" fill="none" stroke="#7a9cbc" stroke-width="0.85"/></svg></div>
<div id="k_n17" class="t" style="left:86.00px;top:549px;transform:scaleX(1.0015)">qe.signed.dll</div>
<div id="k_d17" class="t" style="left:384.70px;top:549px;transform:scaleX(1.0040)">3/25/2019 10:40 AM</div>
<div id="k_t17" class="t" style="left:565.00px;top:549px;transform:scaleX(0.9881)">Application extens...</div>
<div id="k_s17" class="t r" style="right:101px;top:549px;transform:scaleX(0.9220)">802 KB</div>
<div class="ic" style="left:62px;top:574px"><svg width="17" height="19" viewBox="0 0 17 19"><path d="M4.5 1h7l3.5 3.5v11.5h-14v-11h1.5v-2h2z" fill="#f6f6f6"/><circle cx="11" cy="7" r="4.2" fill="#efefef" stroke="#cfcfcf" stroke-width=".8"/><circle cx="11" cy="7" r="2" fill="none" stroke="#c0c8d0" stroke-width=".7"/><path d="M3 8.5h4M3 10.5h5" stroke="#5a6470" stroke-width=".9"/><rect x="1" y="12" width="11.5" height="3.2" fill="#dfe77a"/><path d="M3 13.5h7" stroke="#c8d04a" stroke-width=".8"/><rect x="1" y="15.7" width="11.5" height="1.8" fill="#f4f4e0"/><path d="M12.5 15.5L15.3 12" stroke="#b8c040" stroke-width="1.5"/></svg></div>
<div id="k_n18" class="t" style="left:86.60px;top:576px;transform:scaleX(0.8926)">sgx_base</div>
<div id="k_d18" class="t" style="left:384.70px;top:576px;transform:scaleX(1.0040)">3/25/2019 10:40 AM</div>
<div id="k_t18" class="t" style="left:565.00px;top:576px;transform:scaleX(0.9881)">Security Catalog</div>
<div id="k_s18" class="t r" style="right:101px;top:576px;transform:scaleX(0.9927)">11 KB</div>
<div class="ic" style="left:60px;top:601px"><svg width="19" height="21" viewBox="0 0 19 21"><path d="M3.5 0.5h9.5l4 4v13h-13.5z" fill="#f7f7f7" stroke="#c4c4c4"/><path d="M13 0.5v4h4" fill="#e2e2e2" stroke="#b8b8b8"/><path d="M11.40 13.50L11.29 14.59L9.68 15.11L9.29 15.83L9.76 17.46L8.91 18.16L7.41 17.38L6.62 17.62L5.80 19.10L4.71 18.99L4.19 17.38L3.47 16.99L1.84 17.46L1.14 16.61L1.92 15.11L1.68 14.32L0.20 13.50L0.31 12.41L1.92 11.89L2.31 11.17L1.84 9.54L2.69 8.84L4.19 9.62L4.98 9.38L5.80 7.90L6.89 8.01L7.41 9.62L8.13 10.01L9.76 9.54L10.46 10.39L9.68 11.89L9.92 12.68Z" fill="#efefef" stroke="#a8a8a8" stroke-width=".5"/><circle cx="5.8" cy="13.5" r="2.6" fill="#c4c4c4"/><circle cx="5.8" cy="13.5" r="1.5" fill="#404040"/></svg></div>
<div id="k_n19" class="t" style="left:86.60px;top:603px;transform:scaleX(0.8926)">sgx_base</div>
<div id="k_d19" class="t" style="left:384.70px;top:603px;transform:scaleX(1.0040)">3/25/2019 10:40 AM</div>
<div id="k_t19" class="t" style="left:565.00px;top:603px;transform:scaleX(1.0181)">Setup Information</div>
<div id="k_s19" class="t r" style="right:101px;top:603px;transform:scaleX(0.9590)">5 KB</div>
<div class="ic" style="left:64px;top:628px"><svg width="15" height="18" viewBox="0 0 15 18"><path d="M0.5 0.5h9.5l4 4v13h-13.5z" fill="#f7f7f7" stroke="#c4c4c4" stroke-width="1"/><path d="M10 0.5v4h4" fill="#e2e2e2" stroke="#b8b8b8" stroke-width="1"/><path d="M8.30 8.00L8.19 8.80L7.28 9.20L6.90 9.70L6.75 10.68L6.00 10.99L5.20 10.40L4.58 10.32L3.65 10.68L3.01 10.19L3.12 9.20L2.88 8.62L2.10 8.00L2.21 7.20L3.12 6.80L3.50 6.30L3.65 5.32L4.40 5.01L5.20 5.60L5.82 5.68L6.75 5.32L7.39 5.81L7.28 6.80L7.52 7.38Z" fill="none" stroke="#808a95" stroke-width="0.85"/><circle cx="5.2" cy="8.0" r="0.96" fill="none" stroke="#808a95" stroke-width="0.85"/><path d="M12.00 11.30L11.91 12.00L11.03 12.30L10.71 12.71L10.65 13.64L10.00 13.91L9.30 13.30L8.78 13.23L7.95 13.64L7.39 13.21L7.57 12.30L7.37 11.82L6.60 11.30L6.69 10.60L7.57 10.30L7.89 9.89L7.95 8.96L8.60 8.69L9.30 9.30L9.82 9.37L10.65 8.96L11.21 9.39L11.03 10.30L11.23 10.78Z" fill="none" stroke="#7a9cbc" stroke-width="0.85"/><circle cx="9.3" cy="11.3" r="0.80" fill="none" stroke="#7a9cbc" stroke-width="0.85"/></svg></div>
<div id="k_n20" class="t" style="left:86.00px;top:630px;transform:scaleX(0.9709)">sgx_enclave_common.dll</div>
<div id="k_d20" class="t" style="left:384.70px;top:630px;transform:scaleX(1.0040)">3/25/2019 10:40 AM</div>
<div id="k_t20" class="t" style="left:565.00px;top:630px;transform:scaleX(0.9881)">Application extens...</div>
<div id="k_s20" class="t r" style="right:101px;top:630px;transform:scaleX(0.9418)">69 KB</div>
<div class="ic" style="left:64px;top:655px"><svg width="15" height="18" viewBox="0 0 15 18"><path d="M0.5 0.5h9.5l4 4v13h-13.5z" fill="#f7f7f7" stroke="#c4c4c4" stroke-width="1"/><path d="M10 0.5v4h4" fill="#e2e2e2" stroke="#b8b8b8" stroke-width="1"/><path d="M8.30 8.00L8.19 8.80L7.28 9.20L6.90 9.70L6.75 10.68L6.00 10.99L5.20 10.40L4.58 10.32L3.65 10.68L3.01 10.19L3.12 9.20L2.88 8.62L2.10 8.00L2.21 7.20L3.12 6.80L3.50 6.30L3.65 5.32L4.40 5.01L5.20 5.60L5.82 5.68L6.75 5.32L7.39 5.81L7.28 6.80L7.52 7.38Z" fill="none" stroke="#808a95" stroke-width="0.85"/><circle cx="5.2" cy="8.0" r="0.96" fill="none" stroke="#808a95" stroke-width="0.85"/><path d="M12.00 11.30L11.91 12.00L11.03 12.30L10.71 12.71L10.65 13.64L10.00 13.91L9.30 13.30L8.78 13.23L7.95 13.64L7.39 13.21L7.57 12.30L7.37 11.82L6.60 11.30L6.69 10.60L7.57 10.30L7.89 9.89L7.95 8.96L8.60 8.69L9.30 9.30L9.82 9.37L10.65 8.96L11.21 9.39L11.03 10.30L11.23 10.78Z" fill="none" stroke="#7a9cbc" stroke-width="0.85"/><circle cx="9.3" cy="11.3" r="0.80" fill="none" stroke="#7a9cbc" stroke-width="0.85"/></svg></div>
<div id="k_n21" class="t" style="left:86.00px;top:657px;transform:scaleX(0.9673)">sgx_launch.dll</div>
<div id="k_d21" class="t" style="left:384.70px;top:657px;transform:scaleX(1.0040)">3/25/2019 10:40 AM</div>
<div id="k_t21" class="t" style="left:565.00px;top:657px;transform:scaleX(0.9881)">Application extens...</div>
<div id="k_s21" class="t r" style="right:101px;top:657px;transform:scaleX(0.9220)">233 KB</div>
<div class="ic" style="left:64px;top:682px"><svg width="15" height="18" viewBox="0 0 15 18"><path d="M0.5 0.5h9.5l4 4v13h-13.5z" fill="#f7f7f7" stroke="#c4c4c4" stroke-width="1"/><path d="M10 0.5v4h4" fill="#e2e2e2" stroke="#b8b8b8" stroke-width="1"/><path d="M8.30 8.00L8.19 8.80L7.28 9.20L6.90 9.70L6.75 10.68L6.00 10.99L5.20 10.40L4.58 10.32L3.65 10.68L3.01 10.19L3.12 9.20L2.88 8.62L2.10 8.00L2.21 7.20L3.12 6.80L3.50 6.30L3.65 5.32L4.40 5.01L5.20 5.60L5.82 5.68L6.75 5.32L7.39 5.81L7.28 6.80L7.52 7.38Z" fill="none" stroke="#808a95" stroke-width="0.85"/><circle cx="5.2" cy="8.0" r="0.96" fill="none" stroke="#808a95" stroke-width="0.85"/><path d="M12.00 11.30L11.91 12.00L11.03 12.30L10.71 12.71L10.65 13.64L10.00 13.91L9.30 13.30L8.78 13.23L7.95 13.64L7.39 13.21L7.57 12.30L7.37 11.82L6.60 11.30L6.69 10.60L7.57 10.30L7.89 9.89L7.95 8.96L8.60 8.69L9.30 9.30L9.82 9.37L10.65 8.96L11.21 9.39L11.03 10.30L11.23 10.78Z" fill="none" stroke="#7a9cbc" stroke-width="0.85"/><circle cx="9.3" cy="11.3" r="0.80" fill="none" stroke="#7a9cbc" stroke-width="0.85"/></svg></div>
<div id="k_n22" class="t" style="left:86.60px;top:684px;transform:scaleX(0.8804)">sgx_lc_msr.sys</div>
<div id="k_d22" class="t" style="left:384.70px;top:684px;transform:scaleX(1.0040)">3/25/2019 10:40 AM</div>
<div id="k_t22" class="t" style="left:565.00px;top:684px;transform:scaleX(0.9865)">System file</div>
<div id="k_s22" class="t r" style="right:101px;top:684px;transform:scaleX(0.9418)">36 KB</div>
<div class="ic" style="left:62px;top:709px"><svg width="17" height="19" viewBox="0 0 17 19"><path d="M4.5 1h7l3.5 3.5v11.5h-14v-11h1.5v-2h2z" fill="#f6f6f6"/><circle cx="11" cy="7" r="4.2" fill="#efefef" stroke="#cfcfcf" stroke-width=".8"/><circle cx="11" cy="7" r="2" fill="none" stroke="#c0c8d0" stroke-width=".7"/><path d="M3 8.5h4M3 10.5h5" stroke="#5a6470" stroke-width=".9"/><rect x="1" y="12" width="11.5" height="3.2" fill="#dfe77a"/><path d="M3 13.5h7" stroke="#c8d04a" stroke-width=".8"/><rect x="1" y="15.7" width="11.5" height="1.8" fill="#f4f4e0"/><path d="M12.5 15.5L15.3 12" stroke="#b8c040" stroke-width="1.5"/></svg></div>
<div id="k_n23" class="t" style="left:86.60px;top:711px;transform:scaleX(0.9154)">sgx_psw</div>
<div id="k_d23" class="t" style="left:384.70px;top:711px;transform:scaleX(1.0040)">3/25/2019 10:40 AM</div>
<div id="k_t23" class="t" style="left:565.00px;top:711px;transform:scaleX(0.9881)">Security Catalog</div>
<div id="k_s23" class="t r" style="right:101px;top:711px;transform:scaleX(0.9418)">22 KB</div>
<div class="ic" style="left:60px;top:736px"><svg width="19" height="21" viewBox="0 0 19 21"><path d="M3.5 0.5h9.5l4 4v13h-13.5z" fill="#f7f7f7" stroke="#c4c4c4"/><path d="M13 0.5v4h4" fill="#e2e2e2" stroke="#b8b8b8"/><path d="M11.40 13.50L11.29 14.59L9.68 15.11L9.29 15.83L9.76 17.46L8.91 18.16L7.41 17.38L6.62 17.62L5.80 19.10L4.71 18.99L4.19 17.38L3.47 16.99L1.84 17.46L1.14 16.61L1.92 15.11L1.68 14.32L0.20 13.50L0.31 12.41L1.92 11.89L2.31 11.17L1.84 9.54L2.69 8.84L4.19 9.62L4.98 9.38L5.80 7.90L6.89 8.01L7.41 9.62L8.13 10.01L9.76 9.54L10.46 10.39L9.68 11.89L9.92 12.68Z" fill="#efefef" stroke="#a8a8a8" stroke-width=".5"/><circle cx="5.8" cy="13.5" r="2.6" fill="#c4c4c4"/><circle cx="5.8" cy="13.5" r="1.5" fill="#404040"/></svg></div>
<div id="k_n24" class="t" style="left:86.60px;top:738px;transform:scaleX(0.9154)">sgx_psw</div>
<div id="k_d24" class="t" style="left:384.70px;top:738px;transform:scaleX(1.0040)">3/25/2019 10:40 AM</div>
<div id="k_t24" class="t" style="left:565.00px;top:738px;transform:scaleX(1.0181)">Setup Information</div>
<div id="k_s24" class="t r" style="right:101px;top:738px;transform:scaleX(0.9672)">13 KB</div>
<div class="ic" style="left:64px;top:763px"><svg width="15" height="18" viewBox="0 0 15 18"><path d="M0.5 0.5h9.5l4 4v13h-13.5z" fill="#f7f7f7" stroke="#c4c4c4" stroke-width="1"/><path d="M10 0.5v4h4" fill="#e2e2e2" stroke="#b8b8b8" stroke-width="1"/><path d="M8.30 8.00L8.19 8.80L7.28 9.20L6.90 9.70L6.75 10.68L6.00 10.99L5.20 10.40L4.58 10.32L3.65 10.68L3.01 10.19L3.12 9.20L2.88 8.62L2.10 8.00L2.21 7.20L3.12 6.80L3.50 6.30L3.65 5.32L4.40 5.01L5.20 5.60L5.82 5.68L6.75 5.32L7.39 5.81L7.28 6.80L7.52 7.38Z" fill="none" stroke="#808a95" stroke-width="0.85"/><circle cx="5.2" cy="8.0" r="0.96" fill="none" stroke="#808a95" stroke-width="0.85"/><path d="M12.00 11.30L11.91 12.00L11.03 12.30L10.71 12.71L10.65 13.64L10.00 13.91L9.30 13.30L8.78 13.23L7.95 13.64L7.39 13.21L7.57 12.30L7.37 11.82L6.60 11.30L6.69 10.60L7.57 10.30L7.89 9.89L7.95 8.96L8.60 8.69L9.30 9.30L9.82 9.37L10.65 8.96L11.21 9.39L11.03 10.30L11.23 10.78Z" fill="none" stroke="#7a9cbc" stroke-width="0.85"/><circle cx="9.3" cy="11.3" r="0.80" fill="none" stroke="#7a9cbc" stroke-width="0.85"/></svg></div>
<div id="k_n25" class="t" style="left:86.60px;top:765px;transform:scaleX(0.9245)">sgx_uae_service.dll</div>
<div id="k_d25" class="t" style="left:384.70px;top:765px;transform:scaleX(1.0040)">3/25/2019 10:40 AM</div>
<div id="k_t25" class="t" style="left:565.00px;top:765px;transform:scaleX(0.9881)">Application extens...</div>
<div id="k_s25" class="t r" style="right:101px;top:765px;transform:scaleX(0.9418)">82 KB</div>
<div class="ic" style="left:64px;top:790px"><svg width="15" height="18" viewBox="0 0 15 18"><path d="M0.5 0.5h9.5l4 4v13h-13.5z" fill="#f7f7f7" stroke="#c4c4c4" stroke-width="1"/><path d="M10 0.5v4h4" fill="#e2e2e2" stroke="#b8b8b8" stroke-width="1"/><path d="M8.30 8.00L8.19 8.80L7.28 9.20L6.90 9.70L6.75 10.68L6.00 10.99L5.20 10.40L4.58 10.32L3.65 10.68L3.01 10.19L3.12 9.20L2.88 8.62L2.10 8.00L2.21 7.20L3.12 6.80L3.50 6.30L3.65 5.32L4.40 5.01L5.20 5.60L5.82 5.68L6.75 5.32L7.39 5.81L7.28 6.80L7.52 7.38Z" fill="none" stroke="#808a95" stroke-width="0.85"/><circle cx="5.2" cy="8.0" r="0.96" fill="none" stroke="#808a95" stroke-width="0.85"/><path d="M12.00 11.30L11.91 12.00L11.03 12.30L10.71 12.71L10.65 13.64L10.00 13.91L9.30 13.30L8.78 13.23L7.95 13.64L7.39 13.21L7.57 12.30L7.37 11.82L6.60 11.30L6.69 10.60L7.57 10.30L7.89 9.89L7.95 8.96L8.60 8.69L9.30 9.30L9.82 9.37L10.65 8.96L11.21 9.39L11.03 10.30L11.23 10.78Z" fill="none" stroke="#7a9cbc" stroke-width="0.85"/><circle cx="9.3" cy="11.3" r="0.80" fill="none" stroke="#7a9cbc" stroke-width="0.85"/></svg></div>
<div id="k_n26" class="t" style="left:86.60px;top:792px;transform:scaleX(0.9350)">sgx_urts.dll</div>
<div id="k_d26" class="t" style="left:384.70px;top:792px;transform:scaleX(1.0040)">3/25/2019 10:40 AM</div>
<div id="k_t26" class="t" style="left:565.00px;top:792px;transform:scaleX(0.9881)">Application extens...</div>
<div id="k_s26" class="t r" style="right:101px;top:792px;transform:scaleX(0.9412)">162 KB</div>
<div class="ic" style="left:64px;top:818px"><svg width="15" height="18" viewBox="0 0 15 18"><path d="M0.5 0.5h8.8l3.7 3.7v13.3h-12.5z" fill="#f8f8f8" stroke="#c8c8c8" stroke-width="1"/><path d="M9.3 0.5v3.7h3.7" fill="#e4e4e4" stroke="#bdbdbd" stroke-width="1"/><path d="M3.5 3v9" stroke="#a9b4bf" stroke-width="1"/><path d="M2.5 5.5h8M2.5 7.5h8" stroke="#9fb2c4" stroke-width=".8"/><rect x="5.5" y="6.5" width="5.5" height="6.5" fill="#b9dcef"/><rect x="6" y="10.5" width="4.5" height="2.5" fill="#6f8fb0"/></svg></div>
<div id="k_n27" class="t" style="left:86.60px;top:819px;transform:scaleX(0.9849)">third_party</div>
<div id="k_d27" class="t" style="left:384.70px;top:819px;transform:scaleX(1.0040)">3/25/2019 10:40 AM</div>
<div id="k_t27" class="t" style="left:565.00px;top:819px;transform:scaleX(0.9835)">Rich Text Document</div>
<div id="k_s27" class="t r" style="right:101px;top:819px;transform:scaleX(0.9418)">90 KB</div>
<div class="ic" style="left:61px;top:844px"><svg width="20" height="19" viewBox="0 0 20 19"><defs><linearGradient id="bg" x1="0" y1="1" x2="1" y2="0"><stop offset="0" stop-color="#17707e"/><stop offset=".35" stop-color="#4fb0c0"/><stop offset=".6" stop-color="#b8e6ee"/><stop offset="1" stop-color="#f2fbfc"/></linearGradient></defs><path d="M7.7 0.3L18.9 2.6L16.2 18.2L0.2 13.3Z" fill="url(#bg)"/><path d="M9 2.5L13 3.3L8.5 15.8L4.5 14.5Z" fill="#ffffff" opacity=".35"/><path d="M17.6 2.3L18.9 2.6L16.2 18.2L15.2 17.9Z" fill="#c8a070"/><path d="M7.7 0.3L18.9 2.6L18.6 3.6L7.4 1.4Z" fill="#f4fbfc"/></svg></div>
<div id="k_n28" class="t" style="left:86.60px;top:846px;transform:scaleX(0.9571)">white_list_cert</div>
<div id="k_d28" class="t" style="left:384.70px;top:846px;transform:scaleX(1.0040)">3/25/2019 10:40 AM</div>
<div id="k_t28" class="t" style="left:565.00px;top:846px;transform:scaleX(0.9640)">BIN File</div>
<div id="k_s28" class="t r" style="right:101px;top:846px;transform:scaleX(0.9270)">3 KB</div>
</body></html>
